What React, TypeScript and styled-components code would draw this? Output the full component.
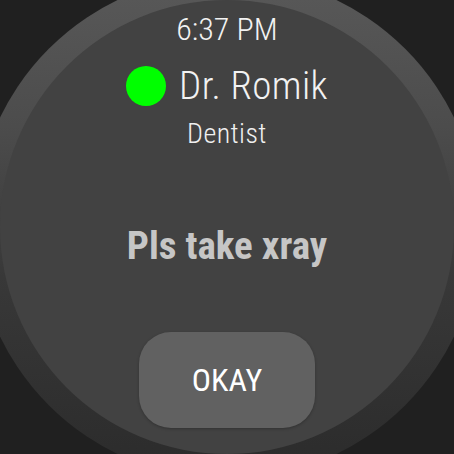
import React from "react";
import styled, { createGlobalStyle } from "styled-components";

const Global = createGlobalStyle`
  html, body { margin: 0; padding: 0; background: #202020; }
  #root { width: 454px; height: 454px; }
`;

const FONT = `"Roboto Condensed", Roboto, "Noto Sans", sans-serif`;

const Screen = styled.div`
  width: 454px;
  height: 454px;
  background: #202020;
  overflow: hidden;
  font-family: ${FONT};
  font-stretch: 88%;
`;

const Bezel = styled.div`
  width: 504px;
  height: 504px;
  margin: -25px;
  box-sizing: border-box;
  padding: 25px;
  border-radius: 50%;
  background: linear-gradient(180deg, #595959 0%, #4c4c4c 30%, #383838 60%, #2b2b2b 100%);
`;

const Face = styled.div`
  width: 454px;
  height: 454px;
  border-radius: 50%;
  background: #424242;
  display: flex;
  flex-direction: column;
  align-items: center;
  padding-top: 13px;
  box-sizing: border-box;
`;

const Text = styled.div<{ $size: number; $weight: number; $color: string; $mt?: number; $ls?: number }>`
  font-size: ${(p) => p.$size}px;
  font-weight: ${(p) => p.$weight};
  color: ${(p) => p.$color};
  letter-spacing: ${(p) => p.$ls ?? 0}px;
  line-height: 1;
  margin-top: ${(p) => p.$mt ?? 0}px;
  white-space: nowrap;
`;

const NameRow = styled.div`
  display: flex;
  align-items: center;
  gap: 13px;
  margin-top: 21px;
  height: 40px;
`;

const StatusDot = styled.span`
  width: 40px;
  height: 40px;
  border-radius: 50%;
  background: #00ff00;
  flex: none;
`;

const OkButton = styled.button`
  margin-top: 66px;
  width: 176px;
  height: 96px;
  border: none;
  border-radius: 32px;
  background: #616161;
  box-shadow: 0 1px 3px rgba(0, 0, 0, 0.25);
  color: #ffffff;
  font-family: ${FONT};
  font-stretch: 88%;
  font-size: 32px;
  font-weight: 400;
  line-height: 1;
  padding: 0;
  display: flex;
  align-items: center;
  justify-content: center;
  cursor: pointer;
`;

export default function App() {
  return (
    <>
      <Global />
      <Screen>
        <Bezel>
          <Face>
            <Text $size={32} $weight={300} $color="#f2f2f2">6:37 PM</Text>
            <NameRow>
              <StatusDot />
              <Text $size={39} $weight={300} $color="#f2f2f2" $ls={0.4}>Dr. Romik</Text>
            </NameRow>
            <Text $size={28} $weight={300} $color="#f0f0f0" $mt={14} $ls={0.4}>Dentist</Text>
            <Text $size={39} $weight={700} $color="#c6c6c6" $mt={79}>Pls take xray</Text>
            <OkButton>OKAY</OkButton>
          </Face>
        </Bezel>
      </Screen>
    </>
  );
}
